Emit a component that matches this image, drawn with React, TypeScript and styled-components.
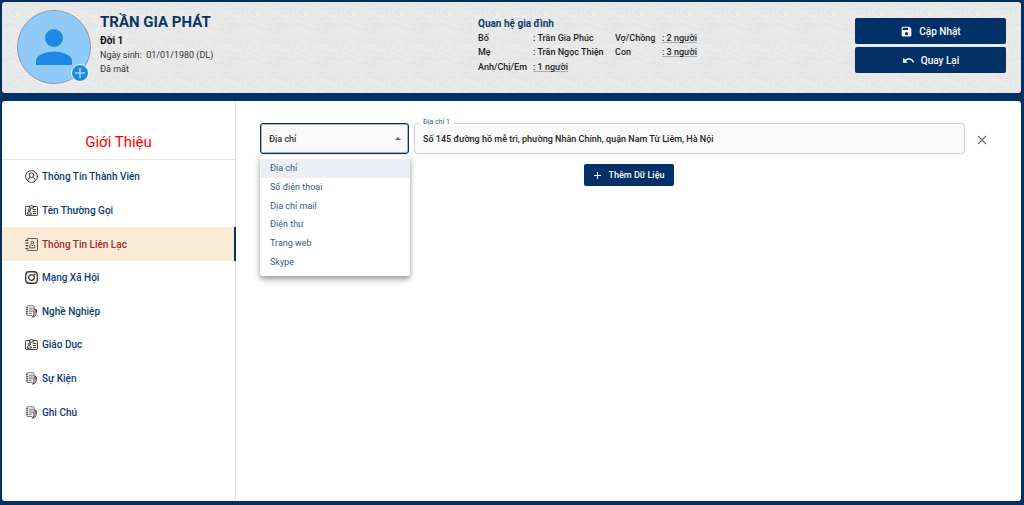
import React, { useState } from "react";
import styled, { createGlobalStyle } from "styled-components";

const navy = "#003066";

const GlobalStyle = createGlobalStyle`
  *, *::before, *::after { box-sizing: border-box; }
  body {
    margin: 0;
    background: ${navy};
    font-family: Roboto, "Liberation Sans", sans-serif;
    font-size: 9px;
    color: #1f1f1f;
  }
  h1, h2, p, ul, dl, dd, dt { margin: 0; padding: 0; }
  ul { list-style: none; }
  button, input, select { font-family: inherit; }
`;

const Page = styled.div`
  display: flex;
  flex-direction: column;
  gap: 8px;
  min-height: 100vh;
  padding: 2px 3px 4px 2px;
`;

const Header = styled.header`
  position: relative;
  display: grid;
  grid-template-columns: minmax(0, 461fr) minmax(0, 377fr) 151px;
  align-items: start;
  padding: 8px 15px 9px;
  border-radius: 3px;
  background: #e9e9e9;
  overflow: hidden;
`;

const Texture = styled.svg`
  position: absolute;
  inset: 0;
  width: 100%;
  height: 100%;
`;

const Profile = styled.div`
  position: relative;
  display: flex;
  gap: 9px;
`;

const Avatar = styled.div`
  position: relative;
  width: 74px;
  height: 74px;
  border: 1px solid #8d9aa6;
  border-radius: 50%;
  background: #90caf9;

  > svg {
    display: block;
    width: 100%;
    height: 100%;
  }
`;

const AvatarAdd = styled.button`
  position: absolute;
  right: 1px;
  bottom: 1px;
  width: 18px;
  height: 18px;
  padding: 0;
  border: 1px solid #fff;
  border-radius: 50%;
  background: #1e88e5;
  cursor: pointer;

  svg { display: block; width: 16px; height: 16px; }
`;

const ProfileText = styled.div`
  padding-top: 2px;
  line-height: 14px;
  color: #333;
`;

const Name = styled.h1`
  font-size: 15px;
  line-height: 21px;
  font-weight: 700;
  color: #0b3567;
`;

const Generation = styled.p`
  font-size: 10px;
  line-height: 15px;
  font-weight: 700;
  color: #111;
`;

const Birth = styled.p`
  white-space: pre;
`;

const Family = styled.section`
  position: relative;
  padding-top: 6px;
`;

const FamilyTitle = styled.h2`
  font-size: 10px;
  line-height: 15px;
  font-weight: 700;
  color: #0b3c74;
`;

const FamilyGrid = styled.dl`
  display: grid;
  grid-template-columns: 55px 82px 47px auto;
  grid-template-rows: repeat(3, 1fr);
  justify-content: start;
  align-items: center;
  height: 43px;
  font-weight: 500;
  white-space: nowrap;
`;

const CountLink = styled.a`
  color: inherit;
  text-decoration: underline #9fadc2 1px;
  text-underline-offset: 1px;
  text-decoration-skip-ink: none;
`;

const Actions = styled.div`
  position: relative;
  display: flex;
  flex-direction: column;
  gap: 3px;
  padding-top: 8px;
`;

const PrimaryButton = styled.button<{ $compact?: boolean }>`
  display: flex;
  align-items: center;
  justify-content: center;
  gap: ${(p) => (p.$compact ? 7 : 6)}px;
  height: ${(p) => (p.$compact ? 22 : 26)}px;
  padding: 0 ${(p) => (p.$compact ? 9 : 10)}px;
  border: 0;
  border-radius: 2px;
  background: ${navy};
  color: #fff;
  font-size: ${(p) => (p.$compact ? 9 : 10)}px;
  font-weight: 500;
  white-space: nowrap;
  cursor: pointer;

  svg { width: ${(p) => (p.$compact ? 9 : 13)}px; height: ${(p) => (p.$compact ? 9 : 13)}px; }
`;

const Main = styled.main`
  display: flex;
  flex: 1;
  border-radius: 3px;
  background: #fff;
`;

const Sidebar = styled.nav`
  flex: 0 0 234px;
  border-right: 1px solid #e3e4e6;
`;

const SidebarTitle = styled.h2`
  padding: 31px 0 6px;
  border-bottom: 1px solid #e6e6e6;
  font-size: 15px;
  line-height: 21px;
  font-weight: 400;
  text-align: center;
  color: #ff0000;
`;

const SidebarList = styled.ul`
  display: grid;
  grid-template-rows: repeat(8, 1fr);
  height: 269px;
  margin-right: -1px;
`;

const SidebarLink = styled.a<{ $active?: boolean }>`
  display: flex;
  align-items: center;
  gap: 4px;
  height: 100%;
  padding-left: 23px;
  border-right: 2px solid ${(p) => (p.$active ? navy : "transparent")};
  background: ${(p) => (p.$active ? "#faebd7" : "transparent")};
  color: ${(p) => (p.$active ? "#a52a2a" : "#0b3c74")};
  font-size: 10px;
  font-weight: 500;
  text-decoration: none;

  svg {
    width: 13px;
    height: 13px;
    color: #333;
    opacity: ${(p) => (p.$active ? 0.8 : 1)};
  }
`;

const Content = styled.section`
  flex: 1;
  display: flex;
  flex-direction: column;
  gap: 10px;
  min-width: 0;
  padding: 22px 24px;
`;

const ContactRow = styled.div`
  display: flex;
  align-items: center;
`;

const SelectWrap = styled.div`
  position: relative;
  flex: 0 0 149px;
  margin-right: 5px;
`;

const TypeSelect = styled.select`
  display: block;
  width: 100%;
  height: 31px;
  padding: 0 24px 0 8px;
  border: 1px solid ${navy};
  border-radius: 3px;
  outline: 0;
  box-shadow: inset 0 0 0 1px #a5b5c8;
  background: #fafafa;
  color: #333;
  font-size: 9px;
  font-weight: 500;
  appearance: none;
`;

const Caret = styled.svg`
  position: absolute;
  top: 14px;
  right: 8px;
  width: 6px;
  height: 3px;
  pointer-events: none;
`;

const Menu = styled.ul`
  position: absolute;
  z-index: 1;
  top: 32px;
  left: 0;
  display: grid;
  grid-template-rows: repeat(6, 1fr);
  width: 150px;
  height: 121px;
  padding: 4px 0 5px;
  border-radius: 3px;
  background: #fff;
  box-shadow: 0 3px 4px rgba(0, 0, 0, 0.2), 0 5px 7px rgba(0, 0, 0, 0.12), 0 1px 9px rgba(0, 0, 0, 0.12);
`;

const MenuItem = styled.li<{ $selected: boolean }>`
  display: flex;
  align-items: center;
  padding: 0 10px;
  background: ${(p) => (p.$selected ? "#ebeef3" : "transparent")};
  color: #335b88;
  cursor: pointer;
`;

const Field = styled.div`
  position: relative;
  flex: 1;
  min-width: 0;
`;

const FieldLabel = styled.label`
  position: absolute;
  top: -6px;
  left: 5px;
  padding: 0 4px;
  background: linear-gradient(#fff 7px, #fafafa 7px);
  color: #335b88;
  font-size: 7px;
  line-height: 10px;
`;

const TextInput = styled.input`
  display: block;
  width: 100%;
  height: 31px;
  padding: 0 8px;
  border: 1px solid #d3d3d3;
  border-radius: 3px;
  outline: 0;
  background: #fafafa;
  color: #222;
  font-size: 9px;
  font-weight: 500;
`;

const RemoveButton = styled.button`
  display: flex;
  align-items: center;
  justify-content: center;
  width: 32px;
  height: 31px;
  padding: 2px 0 0 2px;
  border: 0;
  background: none;
  cursor: pointer;

  svg { width: 10px; height: 10px; }
`;

const AddRow = styled.div`
  display: flex;
  justify-content: center;
`;

const stroke = {
  fill: "none",
  stroke: "currentColor",
  strokeLinecap: "round" as const,
  strokeLinejoin: "round" as const,
};

const PersonCircleIcon = () => (
  <svg viewBox="0 0 26 26" {...stroke} strokeWidth="1.9" aria-hidden="true">
    <circle cx="13" cy="13" r="11.8" />
    <circle cx="13" cy="10.4" r="4.6" />
    <path d="M6 21v-1.5a5 5 0 0 1 4-4.6M20 21v-1.5a5 5 0 0 0-4-4.6" />
  </svg>
);

const IdCardIcon = () => (
  <svg viewBox="0 0 26 26" {...stroke} strokeWidth="1.9" aria-hidden="true">
    <path d="M9.5 5H2.5a1.4 1.4 0 0 0-1.4 1.4v15a1.4 1.4 0 0 0 1.4 1.4h21a1.4 1.4 0 0 0 1.4-1.4v-15A1.4 1.4 0 0 0 23.5 5h-7" />
    <path d="M9.5 7.5V4h1.7a1.9 1.9 0 0 1 3.6 0h1.7v3.5z" />
    <circle cx="8.5" cy="12" r="2.3" />
    <path d="M4.5 19.5c0-2.8 1.5-4 4-4s4 1.2 4 4zM16.500 11h5M16.500 15h5M16.500 19h5" />
  </svg>
);

const ContactBookIcon = () => (
  <svg viewBox="0 0 26 26" {...stroke} strokeWidth="2" aria-hidden="true">
    <path d="M4 5V2.500A1.400 1.400 0 0 1 5.400 1.100h18.200A1.400 1.400 0 0 1 25 2.500v21a1.400 1.400 0 0 1-1.400 1.400H5.400A1.400 1.400 0 0 1 4 23.500V21M4 9.500v1.500M4 15v1.500M1.200 5h5M1.200 10h5M1.200 15.500h5M1.200 21h5" />
    <circle cx="14.500" cy="9" r="2.600" />
    <path d="M9.500 19v-2.500a3 3 0 0 1 3-3l2 2 2-2a3 3 0 0 1 3 3V19z" />
  </svg>
);

const CameraIcon = () => (
  <svg viewBox="0 0 26 26" {...stroke} strokeWidth="2.600" aria-hidden="true">
    <rect x="1.500" y="1.500" width="23" height="23" rx="6.500" />
    <circle cx="13" cy="13" r="5.600" />
    <circle cx="19.500" cy="6.500" r="1" fill="currentColor" strokeWidth="1" />
  </svg>
);

const NoteIcon = () => (
  <svg viewBox="0 0 26 26" {...stroke} strokeWidth="1.300" aria-hidden="true">
    <path d="M18 8V2.500a1 1 0 0 0-1-1H5a1 1 0 0 0-1 1v17.500a1 1 0 0 0 1 1h9" />
    <path d="M2.500 5h3M2.500 9h3M2.500 13h3M2.500 17h3M8.500 6.500h6.500M8.500 10h6.500M8.500 13.500h6.500M8.500 17h4" />
    <path d="M18 10.500v9.500l-3 4.500 4.500-2 2.500-3.500v-9M18 7.500l4.200 2.500v4" strokeWidth="2" />
  </svg>
);

const menuEntries = [
  { label: "Thông Tin Thành Viên", Icon: PersonCircleIcon },
  { label: "Tên Thường Gọi", Icon: IdCardIcon },
  { label: "Thông Tin Liên Lạc", Icon: ContactBookIcon },
  { label: "Mạng Xã Hội", Icon: CameraIcon },
  { label: "Nghề Nghiệp", Icon: NoteIcon },
  { label: "Giáo Dục", Icon: IdCardIcon },
  { label: "Sự Kiện", Icon: NoteIcon },
  { label: "Ghi Chú", Icon: NoteIcon },
];

const contactTypes = ["Địa chỉ", "Số điện thoại", "Địa chỉ mail", "Điện thư", "Trang web", "Skype"];

const HeaderTexture = () => (
  <Texture aria-hidden="true">
    <defs>
      <pattern id="swirls" width="48" height="34" patternUnits="userSpaceOnUse">
        <g fill="none" stroke="#e2e2e2" strokeWidth="1">
          <path d="M12 10a2 2 0 1 1-2 2a5 5 0 1 1 5 5a8 8 0 1 1 6-9M3 20a11 11 0 0 1 2-17M1 25q8-6 16 0t16 0 15 0" />
          <path d="M36 25a2 2 0 1 1-2 2a5 5 0 1 1 5 4a8 8 0 1 1 5-8M26 5q6-5 12 0t10 0M27 9q6-5 12 0t9 0" />
        </g>
        <path d="M13 9a3 3 0 1 1-3 3M25 12q7-6 12 0t11 0M2 29q7-6 13 0t9 0" fill="none" stroke="#eeeeee" />
      </pattern>
    </defs>
    <rect width="100%" height="100%" fill="url(#swirls)" />
  </Texture>
);

export default function App() {
  const [active, setActive] = useState("Thông Tin Liên Lạc");
  const [type, setType] = useState(contactTypes[0]);
  const [open, setOpen] = useState(true);
  const [address, setAddress] = useState("Số 145 đường hồ mễ trì, phường Nhân Chính, quận Nam Từ Liêm, Hà Nội");

  return (
    <>
      <GlobalStyle />
      <Page>
        <Header>
          <HeaderTexture />
          <Profile>
            <Avatar>
              <svg viewBox="0 0 72 72" fill="#1e88e5" aria-hidden="true">
                <circle cx="36" cy="27" r="9" />
                <path d="M18 54v-4.500c0-6 12-9 18-9s18 3 18 9V54z" />
              </svg>
              <AvatarAdd type="button" aria-label="Thêm ảnh">
                <svg viewBox="0 0 16 16" stroke="#a9d5fa" strokeWidth="1.600" aria-hidden="true">
                  <path d="M8 3v10M3 8h10" />
                </svg>
              </AvatarAdd>
            </Avatar>
            <ProfileText>
              <Name>TRẦN GIA PHÁT</Name>
              <Generation>Đời 1</Generation>
              <Birth>{"Ngày sinh:  01/01/1980 (DL)"}</Birth>
              <p>Đã mất</p>
            </ProfileText>
          </Profile>
          <Family>
            <FamilyTitle>Quan hệ gia đình</FamilyTitle>
            <FamilyGrid>
              <dt>Bố</dt>
              <dd>: Trần Gia Phúc</dd>
              <dt>Vợ/Chồng</dt>
              <dd><CountLink href="#spouse">: 2 người</CountLink></dd>
              <dt>Mẹ</dt>
              <dd>: Trần Ngọc Thiện</dd>
              <dt>Con</dt>
              <dd><CountLink href="#children">: 3 người</CountLink></dd>
              <dt>Anh/Chị/Em</dt>
              <dd><CountLink href="#siblings">: 1 người</CountLink></dd>
            </FamilyGrid>
          </Family>
          <Actions>
            <PrimaryButton type="button">
              <svg viewBox="0 0 24 24" fill="currentColor" aria-hidden="true">
                <path d="M17 3H5a2 2 0 0 0-2 2v14a2 2 0 0 0 2 2h14a2 2 0 0 0 2-2V7zm-5 16a3 3 0 1 1 0-6 3 3 0 0 1 0 6zm3-10H5V5h10z" />
              </svg>
              Cập Nhật
            </PrimaryButton>
            <PrimaryButton type="button">
              <svg viewBox="0 0 24 24" fill="currentColor" aria-hidden="true">
                <path d="M12.500 8c-2.650 0-5.050.99-6.900 2.600L2 7v9h9l-3.620-3.620c1.390-1.160 3.160-1.880 5.120-1.880 3.540 0 6.550 2.310 7.600 5.500l2.370-.78C21.080 11.030 17.150 8 12.500 8z" />
              </svg>
              Quay Lại
            </PrimaryButton>
          </Actions>
        </Header>
        <Main>
          <Sidebar aria-label="Giới Thiệu">
            <SidebarTitle>Giới Thiệu</SidebarTitle>
            <SidebarList>
              {menuEntries.map(({ label, Icon }) => (
                <li key={label}>
                  <SidebarLink
                    href="#section"
                    $active={label === active}
                    aria-current={label === active ? "page" : undefined}
                    onClick={() => setActive(label)}
                  >
                    <Icon />
                    {label}
                  </SidebarLink>
                </li>
              ))}
            </SidebarList>
          </Sidebar>
          <Content>
            <ContactRow>
              <SelectWrap>
                <TypeSelect
                  aria-label="Loại liên lạc"
                  value={type}
                  onChange={(e) => setType(e.target.value)}
                  onMouseDown={(e) => {
                    e.preventDefault();
                    setOpen(!open);
                  }}
                >
                  {contactTypes.map((t) => (
                    <option key={t}>{t}</option>
                  ))}
                </TypeSelect>
                <Caret viewBox="0 0 6 3" aria-hidden="true">
                  <path d={open ? "M0 3l3-3 3 3z" : "M0 0l3 3 3-3z"} fill="#666" />
                </Caret>
                {open && (
                  <Menu role="listbox" aria-label="Loại liên lạc">
                    {contactTypes.map((t) => (
                      <MenuItem
                        key={t}
                        role="option"
                        aria-selected={t === type}
                        $selected={t === type}
                        onClick={() => {
                          setType(t);
                          setOpen(false);
                        }}
                      >
                        {t}
                      </MenuItem>
                    ))}
                  </Menu>
                )}
              </SelectWrap>
              <Field>
                <TextInput id="address" value={address} onChange={(e) => setAddress(e.target.value)} />
                <FieldLabel htmlFor="address">Địa chỉ 1</FieldLabel>
              </Field>
              <RemoveButton type="button" aria-label="Xóa" onClick={() => setAddress("")}>
                <svg viewBox="0 0 10 10" stroke="#707070" strokeWidth="1.200" aria-hidden="true">
                  <path d="M1 1l8 8M9 1l-8 8" />
                </svg>
              </RemoveButton>
            </ContactRow>
            <AddRow>
              <PrimaryButton type="button" $compact>
                <svg viewBox="0 0 9 9" stroke="currentColor" aria-hidden="true">
                  <path d="M4.500 1v7M1 4.500h7" />
                </svg>
                Thêm Dữ Liệu
              </PrimaryButton>
            </AddRow>
          </Content>
        </Main>
      </Page>
    </>
  );
}
